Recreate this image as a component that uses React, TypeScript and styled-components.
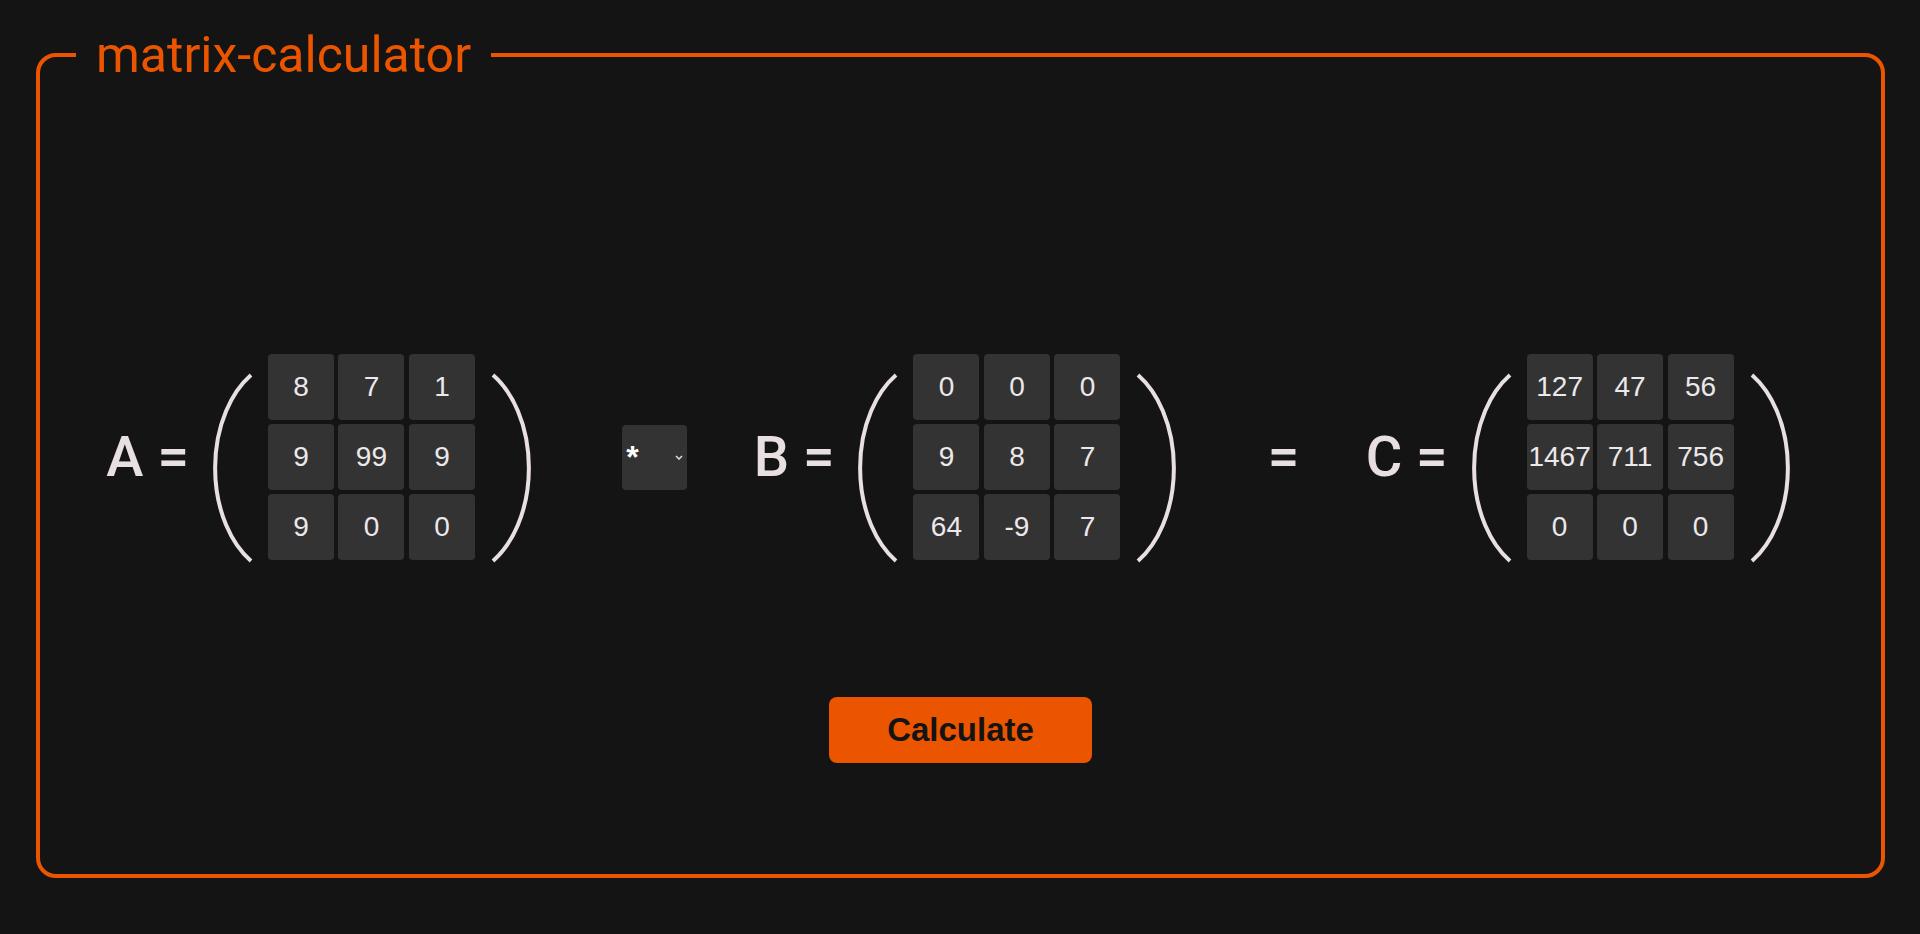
import React from 'react'
import styled, { createGlobalStyle } from 'styled-components'

const ORANGE = '#eb5500'
const INK = '#e8dfe0'

const matrixA = [
  [8, 7, 1],
  [9, 99, 9],
  [9, 0, 0],
]

const matrixB = [
  [0, 0, 0],
  [9, 8, 7],
  [64, -9, 7],
]

const matrixC = [
  [127, 47, 56],
  [1467, 711, 756],
  [0, 0, 0],
]

const Paren = ({ side }: { side: 'left' | 'right' }) => (
  <ParenSvg viewBox="0 0 40 190" width={40} height={190} $side={side}>
    {side === 'left' ? (
      <path d="M 38 2 A 73 108 0 0 0 38 188" />
    ) : (
      <path d="M 2 2 A 73 108 0 0 1 2 188" />
    )}
  </ParenSvg>
)

const Matrix = ({ name, values }: { name: string; values: number[][] }) => (
  <MatrixBlock>
    <Label>{name} =</Label>
    <Paren side="left" />
    <Grid>
      {values.flat().map((v, i) => (
        <Cell key={i} type="text" defaultValue={String(v)} />
      ))}
    </Grid>
    <Paren side="right" />
  </MatrixBlock>
)

export default function App() {
  return (
    <Page>
      <GlobalStyle />
      <Frame>
        <Title>matrix-calculator</Title>
        <EquationRow>
          <Matrix name="A" values={matrixA} />
          <OperatorWrap>
            <OperatorSelect defaultValue="*">
              <option value="+">+</option>
              <option value="-">-</option>
              <option value="*">*</option>
            </OperatorSelect>
            <Chevron viewBox="0 0 8 5" width={8} height={5}>
              <path d="M1 1 L4 4 L7 1" />
            </Chevron>
          </OperatorWrap>
          <Matrix name="B" values={matrixB} />
          <Equals>=</Equals>
          <Matrix name="C" values={matrixC} />
        </EquationRow>
        <ButtonRow>
          <CalcButton>Calculate</CalcButton>
        </ButtonRow>
      </Frame>
    </Page>
  )
}

const GlobalStyle = createGlobalStyle`
  html, body {
    margin: 0;
    background: #141414;
  }

  body {
    font-family: 'Liberation Sans', Arial, sans-serif;
  }
`

const Page = styled.div`
  min-height: 934px;
  box-sizing: border-box;
  padding: 26px 35px 0 36px;
`

const Frame = styled.fieldset`
  margin: 0;
  padding: 267px 0 111px;
  border: 4px solid ${ORANGE};
  border-radius: 20px;
`

const Title = styled.legend`
  margin-left: 36px;
  padding: 0 20px;

  font-family: Roboto, 'Liberation Sans', sans-serif;
  font-weight: 400;
  font-size: 50px;
  line-height: normal;
  color: ${ORANGE};
`

const EquationRow = styled.div`
  height: 212px;

  display: flex;
  justify-content: space-evenly;
  align-items: center;
`

const MatrixBlock = styled.div`
  display: flex;
  align-items: center;
  padding-right: 25px;
`

const Label = styled.span`
  margin-right: 24px;

  font-family: Roboto, 'Liberation Sans', sans-serif;
  font-weight: 500;
  font-size: 56px;
  line-height: normal;
  white-space: pre;
  color: ${INK};
`

const Equals = styled(Label)`
  margin-right: 0;
`

const ParenSvg = styled.svg<{ $side: 'left' | 'right' }>`
  display: block;
  margin-top: 22px;
  margin-right: ${(p) => (p.$side === 'left' ? '15px' : '0')};
  margin-left: ${(p) => (p.$side === 'right' ? '16px' : '0')};

  path {
    fill: none;
    stroke: ${INK};
    stroke-width: 4;
  }
`

const Grid = styled.div`
  display: grid;
  grid-template-columns: repeat(3, 66px);
  column-gap: 4.5px;
  row-gap: 4px;
`

const Cell = styled.input`
  box-sizing: border-box;
  width: 66px;
  height: 66px;
  padding: 0;

  border: none;
  border-radius: 4px;
  outline: none;
  background: #333333;

  font-family: 'Liberation Sans', Arial, sans-serif;
  font-size: 28px;
  text-align: center;
  color: #ece8ec;
`

const OperatorWrap = styled.div`
  position: relative;
  width: 65px;
  height: 65px;
`

const OperatorSelect = styled.select`
  -webkit-appearance: none;
  -moz-appearance: none;
  appearance: none;

  box-sizing: border-box;
  width: 100%;
  height: 100%;
  padding: 0 0 0 4px;

  border: none;
  border-radius: 4px;
  outline: none;
  background: #333333;

  font-family: 'Liberation Sans', Arial, sans-serif;
  font-weight: 700;
  font-size: 32px;
  color: #ffffff;
`

const Chevron = styled.svg`
  position: absolute;
  right: 4px;
  top: 30px;
  pointer-events: none;

  path {
    fill: none;
    stroke: #dddddd;
    stroke-width: 1.5;
  }
`

const ButtonRow = styled.div`
  margin-top: 134px;

  display: flex;
  justify-content: center;
`

const CalcButton = styled.button`
  height: 66px;
  padding: 0 58px;

  border: none;
  border-radius: 8px;
  background: ${ORANGE};
  cursor: pointer;

  font-family: 'Liberation Sans', Arial, sans-serif;
  font-weight: 700;
  font-size: 33px;
  color: #141414;
`
